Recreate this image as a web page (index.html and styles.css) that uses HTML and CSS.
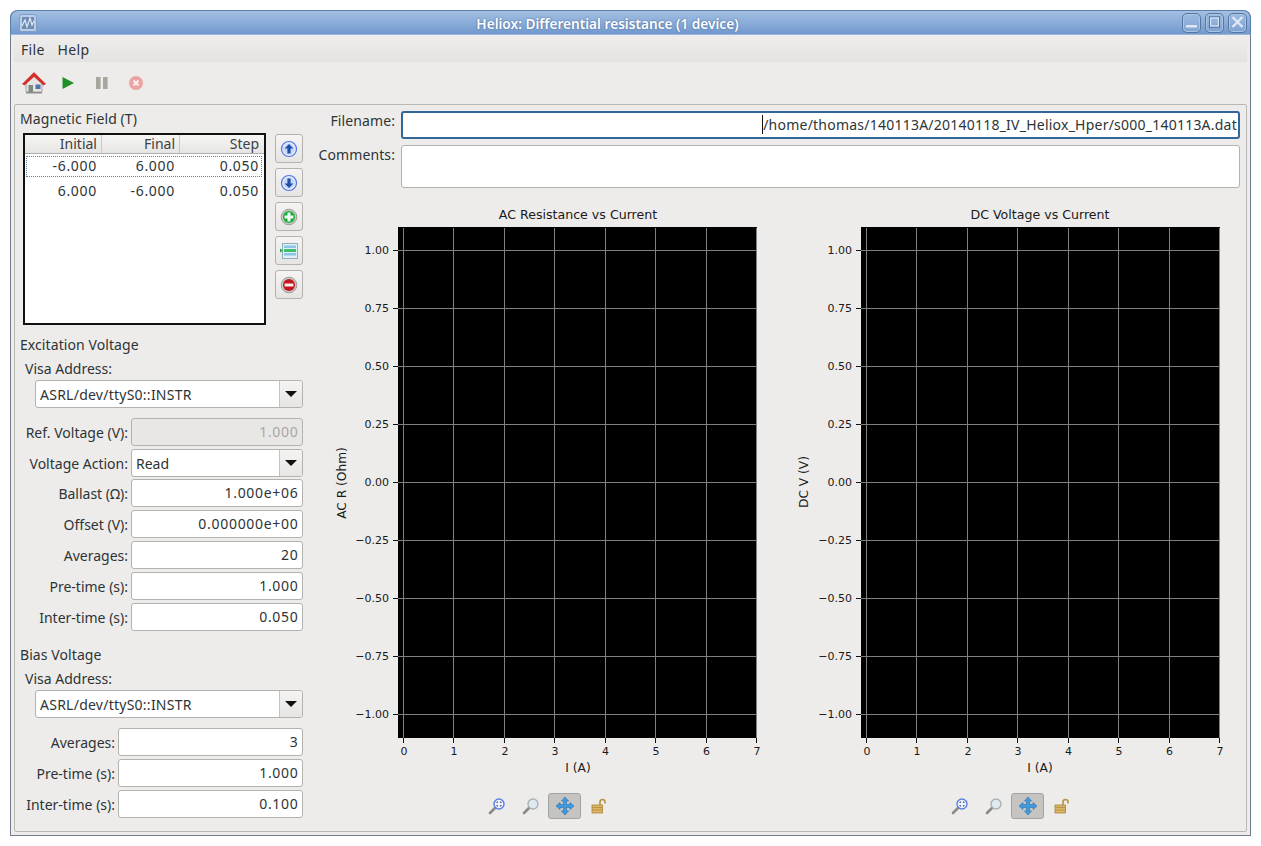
FILE: index.html
```html
<!DOCTYPE html>
<html lang="en">
<head>
    <meta charset="UTF-8">
    <title>Heliox: Differential resistance (1 device)</title>
    <link rel="stylesheet" href="styles.css">
</head>
<body>
    <div class="window">
        <div class="titlebar">
            <svg class="window-icon" width="18" height="18" viewBox="0 0 18 18">
                <rect x="0.5" y="0.5" width="17" height="17" rx="2" fill="#b9cde6" stroke="#7f9cc2"/>
                <rect x="3" y="3" width="12" height="12" fill="#6f8cb3"/>
                <path d="M3 12 L6 6 L8 13 L11 4 L13 11 L15 7" fill="none" stroke="#dfe9f5" stroke-width="1.2"/>
            </svg>
            <span class="window-title">Heliox: Differential resistance (1 device)</span>
            <div class="window-buttons">
                <span class="window-btn"><svg width="17" height="16" viewBox="0 0 17 16"><rect x="3" y="11" width="11" height="2.5" fill="#dfe9f6"/></svg></span>
                <span class="window-btn"><svg width="17" height="16" viewBox="0 0 17 16"><rect x="3.5" y="3" width="10" height="10" fill="none" stroke="#35588a" stroke-width="1"/><rect x="4.5" y="4" width="8" height="8" fill="none" stroke="#d5e2f3" stroke-width="1.4"/></svg></span>
                <span class="window-btn"><svg width="17" height="16" viewBox="0 0 17 16"><path d="M3.5 3 L13.5 13 M13.5 3 L3.5 13" stroke="#dfe9f6" stroke-width="2.4"/></svg></span>
            </div>
        </div>

        <div class="menubar">
            <span>File</span>
            <span>Help</span>
        </div>

        <div class="toolbar">
            <span class="tool">
                <svg width="26" height="26" viewBox="0 0 26 26">
                    <path d="M5 12 L13 5 L21 12 V22 H5 Z" fill="#e4e4e0" stroke="#9a9a96" stroke-width="0.8"/>
                    <path d="M1.5 14 L13 2.5 L24.5 14 L22.5 15 L13 6.5 L3.5 15 Z" fill="#dd2a24" stroke="#b01c18" stroke-width="0.6"/>
                    <rect x="7.5" y="15" width="4.5" height="7" fill="#7f8a80"/>
                    <rect x="14.5" y="14.5" width="5" height="4.5" fill="#4f73b0"/>
                    <rect x="5" y="22" width="16" height="1.5" fill="#8e8e8a"/>
                </svg>
            </span>
            <span class="tool">
                <svg width="14" height="14" viewBox="0 0 14 14"><path d="M1.5 1 L13 7 L1.5 13 Z" fill="#1f8f27"/></svg>
            </span>
            <span class="tool">
                <svg width="14" height="14" viewBox="0 0 14 14"><rect x="1" y="1" width="4.6" height="12" fill="#aaa69e"/><rect x="8" y="1" width="4.6" height="12" fill="#aaa69e"/></svg>
            </span>
            <span class="tool">
                <svg width="16" height="16" viewBox="0 0 16 16"><circle cx="8" cy="8" r="7" fill="#eba3a3"/><path d="M5.5 5.5 L10.5 10.5 M10.5 5.5 L5.5 10.5" stroke="#fbeeee" stroke-width="2"/></svg>
            </span>
        </div>

        <div class="frame">
            <div class="left-panel">
                <div class="group-title">Magnetic Field (T)</div>
                <div class="field-table-row">
                    <div class="field-table">
                        <div class="table-head">
                            <span>Initial</span>
                            <span>Final</span>
                            <span>Step</span>
                        </div>
                        <div class="table-row selected">
                            <span>-6.000</span>
                            <span>6.000</span>
                            <span>0.050</span>
                        </div>
                        <div class="table-row">
                            <span>6.000</span>
                            <span>-6.000</span>
                            <span>0.050</span>
                        </div>
                    </div>
                    <div class="table-buttons">
                        <span class="icon-button">
                            <svg width="18" height="18" viewBox="0 0 18 18"><circle cx="9" cy="9" r="7.5" fill="#e4ecfb" stroke="#4f73e6" stroke-width="1.2"/><circle cx="9" cy="9" r="5.6" fill="#c8d8f4"/><path d="M9 4 L13.4 8.6 H10.6 V13.6 H7.4 V8.6 H4.6 Z" fill="#1f4fa8"/></svg>
                        </span>
                        <span class="icon-button">
                            <svg width="18" height="18" viewBox="0 0 18 18"><circle cx="9" cy="9" r="7.5" fill="#e4ecfb" stroke="#4f73e6" stroke-width="1.2"/><circle cx="9" cy="9" r="5.6" fill="#c8d8f4"/><path d="M9 14 L13.4 9.4 H10.6 V4.4 H7.4 V9.4 H4.6 Z" fill="#1f4fa8"/></svg>
                        </span>
                        <span class="icon-button">
                            <svg width="18" height="18" viewBox="0 0 18 18"><circle cx="9" cy="9" r="7.8" fill="#c9c9c6" stroke="#8f8f8c" stroke-width="0.8"/><circle cx="9" cy="9" r="6" fill="#18b03a"/><path d="M7.5 4.6 H10.5 V7.5 H13.4 V10.5 H10.5 V13.4 H7.5 V10.5 H4.6 V7.5 H7.5 Z" fill="#f4fbf4"/></svg>
                        </span>
                        <span class="icon-button">
                            <svg width="18" height="18" viewBox="0 0 18 18"><rect x="2.5" y="1.5" width="15" height="15" fill="#dff0f6" stroke="#8fb0b8"/><rect x="4" y="3.5" width="12" height="2.5" fill="#8cc4ea"/><rect x="4" y="7" width="12" height="3" fill="#3fbf6a"/><rect x="4" y="11" width="12" height="2.5" fill="#8cc4ea"/><path d="M0 6.5 L3 8.5 L0 10.5 Z" fill="#2da34f"/></svg>
                        </span>
                        <span class="icon-button">
                            <svg width="18" height="18" viewBox="0 0 18 18"><circle cx="9" cy="9" r="7.8" fill="#c9c9c6" stroke="#8f8f8c" stroke-width="0.8"/><circle cx="9" cy="9" r="6" fill="#c5161f"/><rect x="4.6" y="7.5" width="8.8" height="3" fill="#f7eded"/></svg>
                        </span>
                    </div>
                </div>

                <div class="group-title excitation">Excitation Voltage</div>
                <div class="visa-label">Visa Address:</div>
                <div class="combo visa-combo"><span class="combo-text">ASRL/dev/ttyS0::INSTR</span><span class="combo-arrow"></span></div>
                <div class="form-rows">
                    <div class="form-row">
                        <label>Ref. Voltage (V):</label>
                        <div class="spin disabled">1.000</div>
                    </div>
                    <div class="form-row">
                        <label>Voltage Action:</label>
                        <div class="combo"><span class="combo-text">Read</span><span class="combo-arrow"></span></div>
                    </div>
                    <div class="form-row tight">
                        <label>Ballast (Ω):</label>
                        <div class="spin">1.000e+06</div>
                    </div>
                    <div class="form-row">
                        <label>Offset (V):</label>
                        <div class="spin">0.000000e+00</div>
                    </div>
                    <div class="form-row">
                        <label>Averages:</label>
                        <div class="spin">20</div>
                    </div>
                    <div class="form-row">
                        <label>Pre-time (s):</label>
                        <div class="spin">1.000</div>
                    </div>
                    <div class="form-row">
                        <label>Inter-time (s):</label>
                        <div class="spin">0.050</div>
                    </div>
                </div>

                <div class="group-title bias">Bias Voltage</div>
                <div class="visa-label">Visa Address:</div>
                <div class="combo visa-combo"><span class="combo-text">ASRL/dev/ttyS0::INSTR</span><span class="combo-arrow"></span></div>
                <div class="form-rows bias-rows">
                    <div class="form-row">
                        <label>Averages:</label>
                        <div class="spin">3</div>
                    </div>
                    <div class="form-row">
                        <label>Pre-time (s):</label>
                        <div class="spin">1.000</div>
                    </div>
                    <div class="form-row">
                        <label>Inter-time (s):</label>
                        <div class="spin">0.100</div>
                    </div>
                </div>
            </div>

            <div class="right-panel">
                <div class="file-row">
                    <label>Filename:</label>
                    <div class="filename"><span class="caret"></span>/home/thomas/140113A/20140118_IV_Heliox_Hper/s000_140113A.dat</div>
                </div>
                <div class="file-row comments-row">
                    <label>Comments:</label>
                    <div class="comments"></div>
                </div>

                <div class="plots">
                    <div class="plot">
                        <svg class="plot-svg" width="463" height="586" viewBox="0 0 463 586">
                            <text class="plot-title" x="258" y="19">AC Resistance vs Current</text>
                            <rect x="78" y="27" width="359" height="511" fill="#000"/>
                            <path class="grid" d="M83.5 28V538M133.5 28V538M184.5 28V538M234.5 28V538M285.5 28V538M335.5 28V538M386.5 28V538M436.5 28V538M78 50.5H437M78 108.5H437M78 166.5H437M78 224.5H437M78 282.5H437M78 340.5H437M78 398.5H437M78 456.5H437M78 514.5H437"/>
                            <path class="ticks" d="M83.5 538v5M133.5 538v5M184.5 538v5M234.5 538v5M285.5 538v5M335.5 538v5M386.5 538v5M436.5 538v5M78 50.5h-5M78 108.5h-5M78 166.5h-5M78 224.5h-5M78 282.5h-5M78 340.5h-5M78 398.5h-5M78 456.5h-5M78 514.5h-5"/>
                            <g class="ylabels">
                                <text x="69" y="54">1.00</text>
                                <text x="69" y="112">0.75</text>
                                <text x="69" y="170">0.50</text>
                                <text x="69" y="228">0.25</text>
                                <text x="69" y="286">0.00</text>
                                <text x="69" y="344">−0.25</text>
                                <text x="69" y="402">−0.50</text>
                                <text x="69" y="460">−0.75</text>
                                <text x="69" y="518">−1.00</text>
                            </g>
                            <g class="xlabels">
                                <text x="84" y="555">0</text>
                                <text x="134" y="555">1</text>
                                <text x="185" y="555">2</text>
                                <text x="235" y="555">3</text>
                                <text x="285.5" y="555">4</text>
                                <text x="336" y="555">5</text>
                                <text x="386.5" y="555">6</text>
                                <text x="437" y="555">7</text>
                            </g>
                            <text class="axis-label" x="258" y="572">I (A)</text>
                            <text class="axis-label" transform="translate(26 283) rotate(-90)">AC R (Ohm)</text>
                        </svg>
                        <div class="plot-tools">
                            <span class="plot-tool">
                                <svg width="18" height="18" viewBox="0 0 18 18"><path d="M7 11 L2 16" stroke="#8a8a86" stroke-width="2.6" stroke-linecap="round"/><circle cx="11" cy="7" r="5" fill="#eef3fb" stroke="#5a7fe0" stroke-width="1.4"/><path d="M9 6V5h1M12 5h1v1M13 8v1h-1M10 9H9V8" fill="none" stroke="#24407a" stroke-width="1"/></svg>
                            </span>
                            <span class="plot-tool">
                                <svg width="18" height="18" viewBox="0 0 18 18"><path d="M7 11 L2 16" stroke="#8a8a86" stroke-width="2.6" stroke-linecap="round"/><circle cx="11" cy="7" r="5" fill="#dfe9ee" stroke="#a9b2b6" stroke-width="1.4"/></svg>
                            </span>
                            <span class="plot-tool active">
                                <svg width="20" height="20" viewBox="0 0 20 20"><path d="M10 1 L13.5 5 H11.5 V8.5 H15 V6.5 L19 10 L15 13.5 V11.5 H11.5 V15 H13.5 L10 19 L6.5 15 H8.5 V11.5 H5 V13.5 L1 10 L5 6.5 V8.5 H8.5 V5 H6.5 Z" fill="#3f9be0" stroke="#2b6fb4" stroke-width="0.6"/></svg>
                            </span>
                            <span class="plot-tool">
                                <svg width="18" height="18" viewBox="0 0 18 18"><path d="M10 8V5a2.5 2.5 0 0 1 5 0v1.5" fill="none" stroke="#b59343" stroke-width="1.6"/><rect x="2" y="8" width="10.5" height="8" fill="#dcb566" stroke="#a88436" stroke-width="0.8"/><path d="M2.5 10.5h9.5M2.5 13h9.5" stroke="#b08c40" stroke-width="0.8"/></svg>
                            </span>
                        </div>
                    </div>

                    <div class="plot">
                        <svg class="plot-svg" width="463" height="586" viewBox="0 0 463 586">
                            <text class="plot-title" x="257" y="19">DC Voltage vs Current</text>
                            <rect x="78" y="27" width="359" height="511" fill="#000"/>
                            <path class="grid" d="M83.5 28V538M133.5 28V538M184.5 28V538M234.5 28V538M285.5 28V538M335.5 28V538M386.5 28V538M436.5 28V538M78 50.5H437M78 108.5H437M78 166.5H437M78 224.5H437M78 282.5H437M78 340.5H437M78 398.5H437M78 456.5H437M78 514.5H437"/>
                            <path class="ticks" d="M83.5 538v5M133.5 538v5M184.5 538v5M234.5 538v5M285.5 538v5M335.5 538v5M386.5 538v5M436.5 538v5M78 50.5h-5M78 108.5h-5M78 166.5h-5M78 224.5h-5M78 282.5h-5M78 340.5h-5M78 398.5h-5M78 456.5h-5M78 514.5h-5"/>
                            <g class="ylabels">
                                <text x="69" y="54">1.00</text>
                                <text x="69" y="112">0.75</text>
                                <text x="69" y="170">0.50</text>
                                <text x="69" y="228">0.25</text>
                                <text x="69" y="286">0.00</text>
                                <text x="69" y="344">−0.25</text>
                                <text x="69" y="402">−0.50</text>
                                <text x="69" y="460">−0.75</text>
                                <text x="69" y="518">−1.00</text>
                            </g>
                            <g class="xlabels">
                                <text x="84" y="555">0</text>
                                <text x="134" y="555">1</text>
                                <text x="185" y="555">2</text>
                                <text x="235" y="555">3</text>
                                <text x="285.5" y="555">4</text>
                                <text x="336" y="555">5</text>
                                <text x="386.5" y="555">6</text>
                                <text x="437" y="555">7</text>
                            </g>
                            <text class="axis-label" x="257" y="572">I (A)</text>
                            <text class="axis-label" transform="translate(25 282) rotate(-90)">DC V (V)</text>
                        </svg>
                        <div class="plot-tools">
                            <span class="plot-tool">
                                <svg width="18" height="18" viewBox="0 0 18 18"><path d="M7 11 L2 16" stroke="#8a8a86" stroke-width="2.6" stroke-linecap="round"/><circle cx="11" cy="7" r="5" fill="#eef3fb" stroke="#5a7fe0" stroke-width="1.4"/><path d="M9 6V5h1M12 5h1v1M13 8v1h-1M10 9H9V8" fill="none" stroke="#24407a" stroke-width="1"/></svg>
                            </span>
                            <span class="plot-tool">
                                <svg width="18" height="18" viewBox="0 0 18 18"><path d="M7 11 L2 16" stroke="#8a8a86" stroke-width="2.6" stroke-linecap="round"/><circle cx="11" cy="7" r="5" fill="#dfe9ee" stroke="#a9b2b6" stroke-width="1.4"/></svg>
                            </span>
                            <span class="plot-tool active">
                                <svg width="20" height="20" viewBox="0 0 20 20"><path d="M10 1 L13.5 5 H11.5 V8.5 H15 V6.5 L19 10 L15 13.5 V11.5 H11.5 V15 H13.5 L10 19 L6.5 15 H8.5 V11.5 H5 V13.5 L1 10 L5 6.5 V8.5 H8.5 V5 H6.5 Z" fill="#3f9be0" stroke="#2b6fb4" stroke-width="0.6"/></svg>
                            </span>
                            <span class="plot-tool">
                                <svg width="18" height="18" viewBox="0 0 18 18"><path d="M10 8V5a2.5 2.5 0 0 1 5 0v1.5" fill="none" stroke="#b59343" stroke-width="1.6"/><rect x="2" y="8" width="10.5" height="8" fill="#dcb566" stroke="#a88436" stroke-width="0.8"/><path d="M2.5 10.5h9.5M2.5 13h9.5" stroke="#b08c40" stroke-width="0.8"/></svg>
                            </span>
                        </div>
                    </div>
                </div>
            </div>
        </div>
    </div>
</body>
</html>
```
FILE: styles.css
```css
html, body {
    height: 100%;
}
body {
    margin: 0;
    padding: 10px;
    box-sizing: border-box;
    background-color: #ffffff;
    font-family: "Noto Sans", sans-serif;
    font-size: 14px;
    color: #2e3436;
    overflow: hidden;
}
.window {
    height: 826px;
    width: 1241px;
    box-sizing: border-box;
    background-color: #edecea;
    border: 1px solid #6f7d8c;
    border-top: none;
    border-radius: 8px 8px 0 0;
    display: flex;
    flex-direction: column;
}
.titlebar {
    height: 25px;
    margin: 0 -1px;
    flex-shrink: 0;
    position: relative;
    display: flex;
    align-items: center;
    justify-content: center;
    padding: 1px 46px 0 0;
    background: linear-gradient(#a3c0e4, #7299cd);
    border: 1px solid #5c80ae;
    border-bottom: 1px solid #9ab6da;
    border-radius: 8px 8px 0 0;
    box-sizing: border-box;
}
.window-icon {
    position: absolute;
    left: 8px;
    top: 3px;
}
.window-title {
    color: #ffffff;
    font-weight: 600;
    font-size: 13.65px;
    text-shadow: 0 0 2px #3f5f8f;
}
.window-buttons {
    position: absolute;
    right: 3px;
    top: 2px;
    display: flex;
    gap: 4px;
}
.window-btn {
    width: 17px;
    height: 16px;
    border: 1px solid #55769f;
    border-radius: 5px;
    background: linear-gradient(#9cbbe0, #7ea3d2);
    box-shadow: inset 0 0 0 1px #a9c4e6;
    display: block;
    overflow: hidden;
    padding-bottom: 2px;
}
.menubar {
    height: 27px;
    margin: 0 3px;
    flex-shrink: 0;
    padding: 1px 0 0 7px;
    box-sizing: border-box;
    display: flex;
    gap: 13px;
    align-items: center;
    background: linear-gradient(#efeeec, #e4e3e1);
    color: #2e3436;
    letter-spacing: 0.3px;
}
.toolbar {
    height: 42px;
    flex-shrink: 0;
    padding-left: 6px;
    display: flex;
    align-items: center;
}
.tool {
    width: 34px;
    height: 30px;
    display: flex;
    align-items: center;
    justify-content: center;
}
.frame {
    height: 728px;
    margin: 0 3px;
    box-sizing: border-box;
    border: 1px solid #b9b8b5;
    border-radius: 2px;
    display: flex;
}
.left-panel {
    width: 304px;
    flex-shrink: 0;
    padding-top: 4px;
    box-sizing: border-box;
}
.group-title {
    line-height: 20px;
    height: 20px;
    padding-left: 5px;
    letter-spacing: 0.08px;
}
.excitation {
    margin-top: 10px;
}
.bias {
    margin-top: 14px;
}
.field-table-row {
    display: flex;
    margin: 4px 0 0 8px;
}
.field-table {
    width: 243px;
    height: 192px;
    box-sizing: border-box;
    background-color: #ffffff;
    border: 2px solid #111111;
}
.table-head {
    height: 19px;
    box-sizing: border-box;
    display: grid;
    grid-template-columns: 77px 78px 84px;
    background: linear-gradient(#f6f6f5, #e6e5e3);
    border-bottom: 1px solid #b0afac;
    line-height: 18px;
    color: #3c4143;
}
.table-head span {
    text-align: right;
    padding-right: 4px;
    border-right: 1px solid #c9c8c5;
}
.table-head span:last-child {
    border-right: none;
    padding-right: 5px;
}
.table-row {
    height: 21px;
    margin: 2px 2px 4px 1px;
    display: grid;
    grid-template-columns: 76px 78px 84px;
    line-height: 17px;
    box-sizing: border-box;
    border: 1px dotted transparent;
    letter-spacing: 0.7px;
}
.table-row.selected {
    border-color: #5d7fa8;
}
.table-row span {
    text-align: right;
    padding-right: 6px;
}
.table-buttons {
    margin-left: 9px;
    margin-top: 1px;
    display: flex;
    flex-direction: column;
    gap: 5px;
}
.icon-button {
    width: 28px;
    height: 29px;
    box-sizing: border-box;
    border: 1px solid #b3b2af;
    border-radius: 3px;
    background: linear-gradient(#f5f4f3, #e6e5e3);
    display: flex;
    align-items: center;
    justify-content: center;
}
.visa-label {
    line-height: 20px;
    padding-left: 10px;
    margin-top: 4px;
}
.combo {
    height: 28px;
    box-sizing: border-box;
    border: 1px solid #b3b2af;
    border-radius: 3px;
    background-color: #ffffff;
    display: flex;
    align-items: center;
    flex: 1;
}
.visa-combo {
    margin: 1px 0 0 20px;
    width: 268px;
    flex: none;
}
.visa-combo .combo-text {
    padding-left: 4px;
    letter-spacing: 0.25px;
}
.combo-text {
    flex: 1;
    padding-left: 4px;
}
.combo-arrow {
    width: 22px;
    height: 26px;
    border-left: 1px solid #c4c3c0;
    background: linear-gradient(#f5f4f3, #e6e5e3);
    position: relative;
    border-radius: 0 3px 3px 0;
}
.combo-arrow::after {
    content: "";
    position: absolute;
    left: 5px;
    top: 10px;
    border-left: 6px solid transparent;
    border-right: 6px solid transparent;
    border-top: 6px solid #111111;
}
.form-rows {
    margin-top: 10px;
    display: flex;
    flex-direction: column;
    gap: 3px;
}
.form-row {
    display: flex;
    align-items: center;
    height: 28px;
    width: 288px;
}
.form-row.tight {
    margin-top: -1px;
}
.form-row label {
    width: 113px;
    text-align: right;
    padding-right: 3px;
    flex-shrink: 0;
    white-space: nowrap;
}
.bias-rows .form-row label {
    width: 100px;
}
.spin {
    flex: 1;
    height: 28px;
    box-sizing: border-box;
    border: 1px solid #b3b2af;
    border-radius: 3px;
    background-color: #ffffff;
    text-align: right;
    line-height: 26px;
    padding-right: 3.5px;
    letter-spacing: 0.7px;
}
.spin.disabled {
    background-color: #e8e7e5;
    color: #a9a8a6;
}
.right-panel {
    flex: 1;
    min-width: 0;
}
.file-row {
    display: flex;
    align-items: flex-start;
    margin-left: -1px;
}
.file-row label {
    width: 77px;
    text-align: right;
    flex-shrink: 0;
    line-height: 20px;
    letter-spacing: 0.1px;
}
.file-row:first-child label {
    margin-top: 6px;
}
.filename {
    margin: 6px 6px 0 6px;
    flex: 1;
    height: 28px;
    box-sizing: border-box;
    border: 2px solid #336699;
    border-radius: 3px;
    background-color: #ffffff;
    text-align: right;
    line-height: 24px;
    padding-right: 1px;
    white-space: nowrap;
    letter-spacing: 0.23px;
}
.caret {
    display: inline-block;
    width: 1px;
    height: 19px;
    background-color: #111111;
    vertical-align: -4px;
}
.comments-row {
    margin-top: 6px;
    height: 43px;
}
.comments {
    margin: 0 6px;
    flex: 1;
    height: 43px;
    box-sizing: border-box;
    border: 1px solid #b3b2af;
    border-radius: 3px;
    background-color: #ffffff;
}
.plots {
    display: flex;
    margin: 12px 0 0 1px;
}
.plot {
    width: 463px;
}
.plot-svg {
    display: block;
    font-family: "DejaVu Sans", sans-serif;
    font-size: 11px;
    fill: #1a1a1a;
}
.plot-title, .axis-label, .xlabels text {
    text-anchor: middle;
}
.plot-title {
    font-size: 12.6px;
}
.axis-label {
    font-size: 12.2px;
}
.ylabels text {
    text-anchor: end;
}
.grid {
    stroke: #808080;
    stroke-width: 1;
    fill: none;
}
.ticks {
    stroke: #111111;
    stroke-width: 1;
    fill: none;
}
.plot-tools {
    display: flex;
    justify-content: center;
    gap: 1px;
    margin-top: 7px;
    padding-right: 8px;
    height: 26px;
}
.plot-tool {
    width: 33px;
    height: 26px;
    box-sizing: border-box;
    display: flex;
    align-items: center;
    justify-content: center;
    border: 1px solid transparent;
    border-radius: 3px;
}
.plot-tool.active {
    background-color: #c5c4c1;
    border-color: #a3a2a0;
}
```
